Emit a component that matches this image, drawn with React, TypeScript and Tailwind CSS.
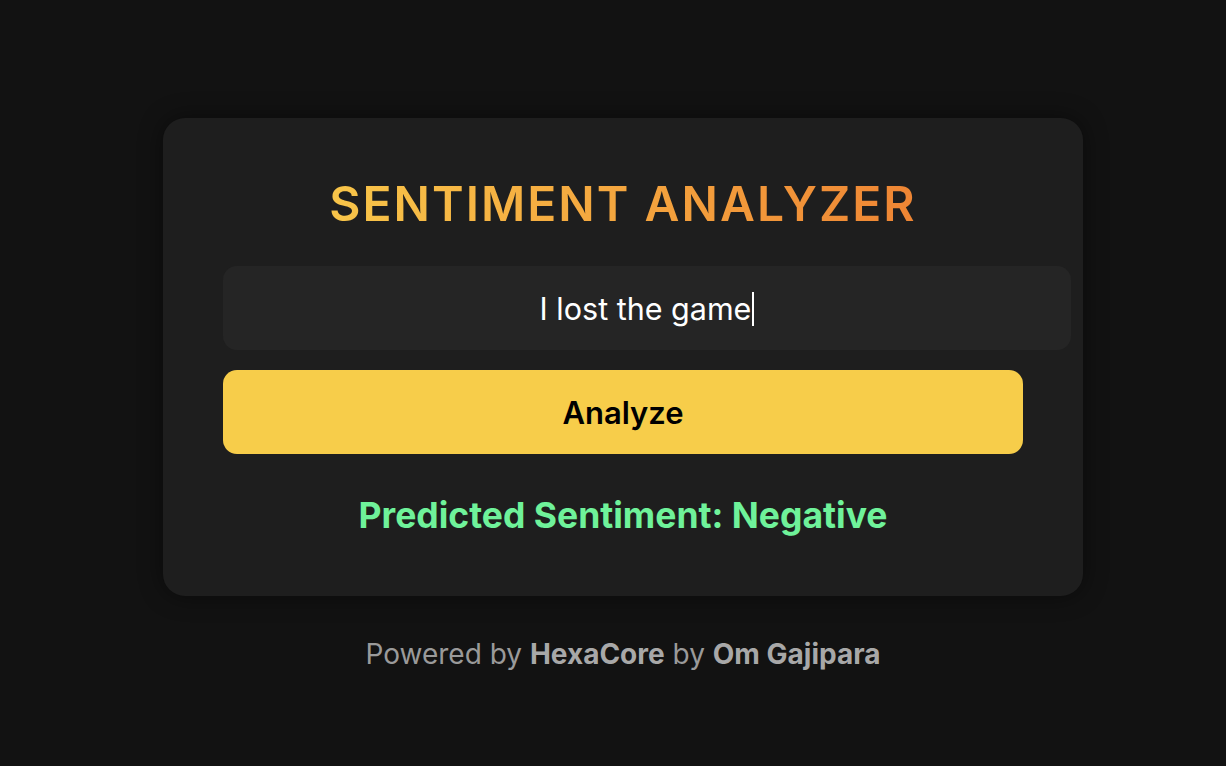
export default function App() {
  return (
    <div className="flex min-h-screen w-full flex-col items-center bg-[#121212] pl-[20px] pt-[118px] font-['Inter','Liberation_Sans',sans-serif]">
      {/* card */}
      <div className="flex w-[920px] flex-col items-center rounded-[22px] bg-[#1e1e1e] px-[60px] pb-[58px] pt-[57px] shadow-[0_0_24px_rgba(0,0,0,0.45)]">
        <h1 className="bg-gradient-to-r from-[#f8c549] to-[#ee8534] bg-clip-text text-[48px] font-semibold leading-[58px] tracking-[2px] text-transparent">
          SENTIMENT ANALYZER
        </h1>

        <div className="mt-[33px] flex h-[84px] w-[848px] self-start items-center justify-center rounded-[14px] bg-[#252525] px-[24px] pt-[2px] text-[30.5px] text-white">
          <span>I lost the game</span>
          <span className="ml-[1px] h-[34px] w-[2px] bg-white" />
        </div>

        <button className="mt-[20px] h-[84px] w-full rounded-[14px] bg-[#f7cd4a] pt-[2px] text-[31px] font-semibold text-black">
          Analyze
        </button>

        <p className="mt-[40px] text-[35.5px] font-bold leading-[44px] text-[#6ff29a]">
          Predicted Sentiment: Negative
        </p>
      </div>

      <p className="mt-[40px] text-[28px] leading-[36px] text-[#9a9a9a]">
        Powered by <span className="font-bold text-[#a8a8a8]">HexaCore</span> by{" "}
        <span className="font-bold text-[#a8a8a8]">Om Gajipara</span>
      </p>
    </div>
  );
}
